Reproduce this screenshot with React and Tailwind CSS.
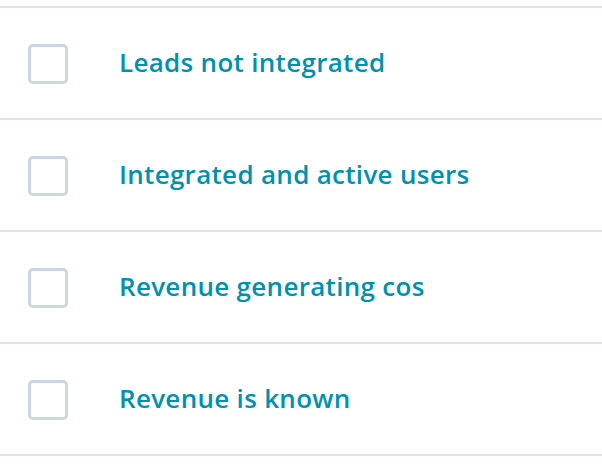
export default function App() {
  const items = [
    "Leads not integrated",
    "Integrated and active users",
    "Revenue generating cos",
    "Revenue is known",
  ];
  return (
    <div className="w-[602px] h-[468px] bg-white pt-[6px]" style={{ fontFamily: "'Open Sans', 'Noto Sans', sans-serif" }}>
      <div className="border-b-2 border-[#dfe3eb]">
        {items.map((t) => (
          <div key={t} className="flex items-center h-[112px] border-t-2 border-[#dfe3eb] pl-[28px]">
            <div className="w-[40px] h-[40px] border-[3px] border-[#cbd6e2] rounded-[5px] bg-white shrink-0 mt-[2px]" />
            <div className="ml-[51px] mb-[2px] text-[26px] leading-none font-semibold text-[#0091ae] tracking-[0.3px]">{t}</div>
          </div>
        ))}
      </div>
    </div>
  );
}
